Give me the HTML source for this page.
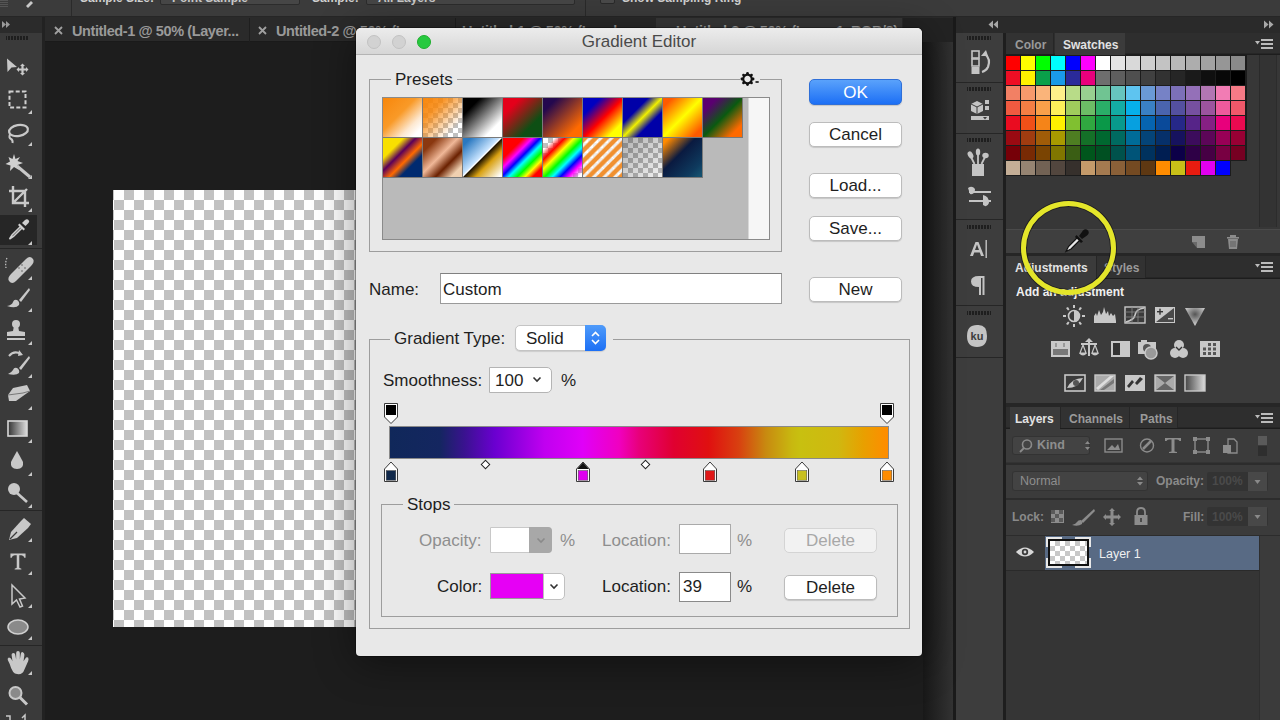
<!DOCTYPE html>
<html><head><meta charset="utf-8">
<style>
*{box-sizing:border-box}
html,body{margin:0;padding:0;width:1280px;height:720px;overflow:hidden;background:#1d1d1d;font-family:"Liberation Sans",sans-serif}
.a{position:absolute}
/* top options bar */
#opt{left:0;top:0;width:1280px;height:17px;background:#3b3b3b;border-bottom:1px solid #262626}
#tabs{left:0;top:17px;width:1280px;height:25px;background:#2a2a2a;border-bottom:1px solid #1a1a1a}
.tab{top:19px;height:24px;color:#9a9a9a;font-weight:bold;font-size:14.5px;letter-spacing:-0.4px;line-height:24px;white-space:nowrap}
#tool{left:0;top:17px;width:42px;height:703px;background:#3a3a3a}
#toolsep{left:42px;top:17px;width:3px;height:703px;background:#222}
#doc{left:45px;top:42px;width:910px;height:678px;background:#1d1d1d}
#canvas{left:113px;top:190px;width:245px;height:437px;
 background-color:#fff;
 background-image:linear-gradient(45deg,#c2c2c2 25%,transparent 25%,transparent 75%,#c2c2c2 75%),linear-gradient(45deg,#c2c2c2 25%,transparent 25%,transparent 75%,#c2c2c2 75%);
 background-size:20px 20px;background-position:1px 0,11px 10px}
/* right side */
#rcolsep{left:955px;top:17px;width:2px;height:703px;background:#1e1e1e}
#rcol{left:957px;top:17px;width:47px;height:703px;background:#2b2b2b}
#rpanel{left:1004px;top:17px;width:276px;height:703px;background:#2b2b2b;border-left:2px solid #1e1e1e}

/* dialog */
#dlg{left:356px;top:28px;width:566px;height:628px;background:#e8e8e8;border-radius:5px 5px 4px 4px;box-shadow:0 0 0 1px rgba(0,0,0,.3),0 6px 40px rgba(0,0,0,.45)}
#dtitle{left:0;top:0;width:566px;height:27px;border-radius:5px 5px 0 0;background:linear-gradient(#ececec,#d6d6d6);border-bottom:1px solid #b4b4b4;color:#4a4a4a;font-size:17px;text-align:center;line-height:28px}
.tl{width:14px;height:14px;border-radius:50%;top:7px;background:#d2d2d2;border:1px solid #c2c2c2}
.dt{color:#1e1e1e;font-size:17px;line-height:18px;white-space:nowrap}
.grp{border:1px solid #9d9d9d}
.lbl{background:#e8e8e8;padding:0 4px}
.btn{background:#fff;border:1px solid #bcbcbc;border-radius:5px;box-shadow:0 1px 1px rgba(0,0,0,.15);text-align:center;color:#1e1e1e;font-size:17px}
.sw{width:40px;height:40px;border-right:1px solid #7a7a7a;border-bottom:1px solid #7a7a7a}
.chk{background-color:#fff;background-image:linear-gradient(45deg,#c8c8c8 25%,transparent 25%,transparent 75%,#c8c8c8 75%),linear-gradient(45deg,#c8c8c8 25%,transparent 25%,transparent 75%,#c8c8c8 75%);background-size:10px 10px;background-position:0 0,5px 5px}
.fld{background:#fff;border:1px solid #9a9a9a;border-top-color:#808080}

.opt{color:#d0d0d0;font-weight:bold;font-size:12px;line-height:13px;white-space:nowrap}
.ptab{font-weight:bold;font-size:12px;line-height:24px;white-space:nowrap}
</style></head><body>
<div id="opt" class="a"></div>
<div id="tabs" class="a"></div>
<div id="doc" class="a"></div>
<div id="canvas" class="a"></div>
<div id="tool" class="a"></div>
<div id="toolsep" class="a"></div>
<svg class="a" style="left:0;top:0" width="42" height="720" viewBox="0 0 42 720">
 <rect x="0" y="17" width="42" height="16" fill="#2b2b2b"/>
 <path d="M2 21 L6 24.5 L2 28 Z M6 21 L10 24.5 L6 28 Z" fill="#9a9a9a"/>
 <rect x="6" y="36" width="22" height="4" fill="#1e1e1e"/>
 <g fill="#3a3a3a"><rect x="7" y="36" width="1" height="4"/><rect x="10" y="36" width="1" height="4"/><rect x="13" y="36" width="1" height="4"/><rect x="16" y="36" width="1" height="4"/><rect x="19" y="36" width="1" height="4"/><rect x="22" y="36" width="1" height="4"/><rect x="25" y="36" width="1" height="4"/></g>
 <rect x="0" y="215" width="37" height="30" fill="#262626"/>
 <g stroke="#262626" stroke-width="1"><line x1="0" y1="248.5" x2="42" y2="248.5"/><line x1="0" y1="510.5" x2="42" y2="510.5"/><line x1="0" y1="645.5" x2="42" y2="645.5"/></g>
 <g fill="#c8c8c8" stroke="none">
  <!-- corner triangles -->
  <path d="M28 114 L32 110 L32 114 Z M28 146 L32 142 L32 146 Z M28 179 L32 175 L32 179 Z M28 212 L32 208 L32 212 Z M28 245 L32 241 L32 245 Z M28 280 L32 276 L32 280 Z M28 312 L32 308 L32 312 Z M28 345 L32 341 L32 345 Z M28 378 L32 374 L32 378 Z M28 410 L32 406 L32 410 Z M28 443 L32 439 L32 443 Z M28 476 L32 472 L32 476 Z M28 508 L32 504 L32 508 Z M28 542 L32 538 L32 542 Z M28 575 L32 571 L32 575 Z M28 608 L32 604 L32 608 Z M28 640 L32 636 L32 640 Z M28 675 L32 671 L32 675 Z"/>
  <!-- move -->
  <path d="M7 58.5 L17 67 L11.5 67.5 L7.5 72 Z"/>
  <path d="M22.5 63.5 L25 66 L23.6 66 L23.6 68.4 L26 68.4 L26 67 L28.5 69.5 L26 72 L26 70.6 L23.6 70.6 L23.6 73 L25 73 L22.5 75.5 L20 73 L21.4 73 L21.4 70.6 L19 70.6 L19 72 L16.5 69.5 L19 67 L19 68.4 L21.4 68.4 L21.4 66 L20 66 Z"/>
 </g>
 <!-- marquee -->
 <rect x="9.5" y="91.5" width="16" height="16" fill="none" stroke="#d0d0d0" stroke-width="2" stroke-dasharray="4 2.2"/>
 <!-- lasso -->
 <ellipse cx="18.5" cy="130.5" rx="9.5" ry="5.5" fill="none" stroke="#c8c8c8" stroke-width="2.2" transform="rotate(-10 18.5 130.5)"/>
 <path d="M10 134 Q8.5 138 11 139 Q13 140 12.5 143" fill="none" stroke="#c8c8c8" stroke-width="2"/>
 <!-- wand -->
 <path d="M14 154 L15.5 159 L20 157 L17.5 161 L23 163 L17.5 165 L19 170 L14 167 L10 171 L10.5 165.5 L5.5 164 L10 161.5 L8.5 157 L12.5 159 Z" fill="#d0d0d0"/>
 <line x1="17" y1="166" x2="30" y2="177" stroke="#c8c8c8" stroke-width="3"/>
 <!-- crop -->
 <path d="M13 186 L13 203 L29 203 M9 191 L25 191 L25 207 M13 203 L27 189" fill="none" stroke="#c8c8c8" stroke-width="2.4"/>
 <!-- eyedropper -->
 <path d="M22 223 L25 220 Q27 218.5 28.5 220 Q30 221.5 28.5 223 L25.5 226 Z" fill="#cfcfcf"/>
 <path d="M19.5 223.5 L25 229 L23.5 230.5 L18 225 Z" fill="#cfcfcf"/>
 <path d="M20.5 226.5 L12 235 L9.5 239 L13.5 236.5 L22 228 Z" fill="#555" stroke="#cfcfcf" stroke-width="1.5"/>
 <!-- healing -->
 <path d="M11 274 L26 259 Q30 255 33 259 Q35 262 31 266 L16 281 Q12 285 9 281 Q7 278 11 274 Z" fill="#c8c8c8"/>
 <g fill="#8a8a8a"><circle cx="19" cy="268" r="1"/><circle cx="22" cy="271" r="1"/><circle cx="22" cy="265" r="1"/><circle cx="25" cy="268" r="1"/></g>
 <path d="M7 258 Q5 262 6 268" fill="none" stroke="#c8c8c8" stroke-width="1.2" stroke-dasharray="1.5 1.5"/>
 <!-- brush -->
 <path d="M29 288 L19 300 L21 302 L30 290 Z" fill="#c8c8c8"/>
 <path d="M17 300 Q20 302 19 305 Q16 309 7 306 Q12 305 13 302 Q14 299 17 300 Z" fill="#c8c8c8"/>
 <!-- stamp -->
 <circle cx="16" cy="324" r="4" fill="#c8c8c8"/>
 <path d="M14 326 L18 326 L19 331 L25 332 L25 336 L7 336 L7 332 L13 331 Z" fill="#c8c8c8"/>
 <rect x="7" y="338" width="18" height="2" fill="#c8c8c8"/>
 <!-- history brush -->
 <path d="M9 356 Q14 350 21 354" fill="none" stroke="#c8c8c8" stroke-width="2"/>
 <path d="M19 350 L23 355 L18 356 Z" fill="#c8c8c8"/>
 <path d="M29 356 L19 368 L21 370 L30 358 Z" fill="#c8c8c8"/>
 <path d="M17 368 Q20 370 19 373 Q16 376 8 374 Q12 372 13 370 Q14 367 17 368 Z" fill="#c8c8c8"/>
 <!-- eraser -->
 <path d="M13 388 L27 385 L30 391 L16 401 L9 401 L8 395 Z" fill="#c8c8c8"/>
 <path d="M8 395 L23 393 L30 391" fill="none" stroke="#777" stroke-width="1"/>
 <!-- gradient tool -->
 <defs><linearGradient id="gt" x1="0" x2="1"><stop offset="0" stop-color="#333"/><stop offset="1" stop-color="#ddd"/></linearGradient>
 <linearGradient id="gt2" x1="0" x2="1"><stop offset="0" stop-color="#444"/><stop offset="1" stop-color="#ddd"/></linearGradient></defs>
 <rect x="8" y="421" width="19" height="15" fill="url(#gt)" stroke="#d8d8d8" stroke-width="1.6"/>
 <!-- drop -->
 <path d="M17 451 Q13 458 11 462 Q10 469 17 469 Q24 469 23 462 Q21 458 17 451 Z" fill="#c8c8c8"/>
 <!-- dodge -->
 <circle cx="14" cy="489" r="6" fill="#c8c8c8"/>
 <line x1="17" y1="493" x2="27" y2="502" stroke="#c8c8c8" stroke-width="2.6"/>
 <!-- pen -->
 <path d="M24 518 L31 524 L28 528 L17 538 L9 540 L11 532 L21 521 Z" fill="#c8c8c8"/>
 <path d="M10 539 L17 532" stroke="#3a3a3a" stroke-width="1.2"/>
 <!-- type -->
 <g transform="translate(18 561.5) scale(0.84) translate(-18 -561.5)"><path d="M9 552 L27 552 L27 557 L25.5 557 Q25 554 22 554 L19.5 554 L19.5 569 L22 570 L22 571 L14 571 L14 570 L16.5 569 L16.5 554 L14 554 Q11 554 10.5 557 L9 557 Z" fill="#c8c8c8"/></g>
 <!-- path selection -->
 <path d="M12 585 L12 604 L16.5 600 L20 607 L22.5 606 L19.5 599 L25 598 Z" fill="#3a3a3a" stroke="#c8c8c8" stroke-width="1.5"/>
 <!-- ellipse -->
 <ellipse cx="18" cy="627" rx="10" ry="7" fill="#8a8a8a" stroke="#d0d0d0" stroke-width="1.5"/>
 <!-- hand -->
 <g transform="translate(0,4) translate(18 660) scale(0.92) translate(-18 -660)">
 <path d="M9 660 L7 656 Q6 654 8 653 Q10 653 11 655 L12 657 L11 650 Q11 648 13 648 Q15 648 15 650 L16 655 L16 648 Q16 646 18 646 Q20 646 20 648 L20 655 L21 649 Q21 647 23 647 Q25 648 25 650 L24 657 L26 654 Q27 652 29 653 Q30 655 29 657 L25 666 Q23 672 17 671 Q12 671 9 660 Z" fill="#c8c8c8"/>
 </g>
 <!-- zoom -->
 <circle cx="15.5" cy="693" r="6" fill="#8a8a8a" stroke="#c8c8c8" stroke-width="2"/>
 <line x1="19.5" y1="697" x2="27" y2="704.5" stroke="#c8c8c8" stroke-width="3"/>
 <!-- fg/bg hint -->
 <path d="M6 716 L10 716 L10 720 M22 718 L25 715 L25 720" fill="none" stroke="#c8c8c8" stroke-width="1.5"/>
</svg>

<div class="a" style="left:71px;top:0;width:1px;height:16px;background:#2a2a2a"></div>
<svg class="a" style="left:22px;top:0" width="16" height="8" viewBox="0 0 16 8"><path d="M4 6 L9 1 L11 3 L6 8 Z" fill="#c8c8c8"/></svg>
<div class="a" style="left:0;top:0;width:8px;height:8px;background:repeating-linear-gradient(#555 0,#555 1px,transparent 1px,transparent 2px)"></div>
<div class="a" style="left:585px;top:0;width:1px;height:16px;background:#2a2a2a"></div>
<div class="a opt" style="left:80px;top:-8px">Sample Size:</div>
<div class="a" style="left:160px;top:-11px;width:140px;height:16px;background:#464646;border:1px solid #2c2c2c;border-radius:2px"></div>
<div class="a opt" style="left:172px;top:-8px;color:#c8c8c8">Point Sample</div>
<div class="a opt" style="left:312px;top:-8px">Sample:</div>
<div class="a" style="left:366px;top:-11px;width:209px;height:16px;background:#464646;border:1px solid #2c2c2c;border-radius:2px"></div>
<div class="a opt" style="left:378px;top:-8px;color:#c8c8c8">All Layers</div>
<div class="a" style="left:600px;top:-9px;width:15px;height:13px;background:#4a4a4a;border:1px solid #2a2a2a;border-radius:2px"></div>
<div class="a opt" style="left:622px;top:-8px">Show Sampling Ring</div>
<div class="a" style="left:249px;top:18px;width:1px;height:24px;background:#1e1e1e"></div><div class="a" style="left:455px;top:18px;width:1px;height:24px;background:#1e1e1e"></div>
<div class="a" style="left:656px;top:18px;width:246px;height:24px;background:#383838"></div>
<div class="a tab" style="left:72px">Untitled-1 @ 50% (Layer...</div>
<div class="a tab" style="left:276px">Untitled-2 @ 50% (Layer...</div>
<div class="a tab" style="left:462px">Untitled-1 @ 50% (Levels...</div>
<div class="a tab" style="left:676px;color:#a8a8a8">Untitled-3 @ 50% (Layer 1, RGB/8)</div>
<svg class="a" style="left:54px;top:26px" width="9" height="9" viewBox="0 0 9 9"><path d="M1 1 L8 8 M8 1 L1 8" stroke="#a0a0a0" stroke-width="1.8"/></svg>
<svg class="a" style="left:258px;top:26px" width="9" height="9" viewBox="0 0 9 9"><path d="M1 1 L8 8 M8 1 L1 8" stroke="#a0a0a0" stroke-width="1.8"/></svg>
<div class="a" style="left:923px;top:42px;width:30px;height:678px;background:linear-gradient(90deg,#181818,#323232)"></div>

<!-- right icon column -->
<div class="a" style="left:903px;top:18px;width:50px;height:24px;background:#232323"></div>
<div class="a" style="left:953px;top:17px;width:3px;height:703px;background:#1a1a1a"></div>
<div class="a" style="left:956px;top:17px;width:48px;height:16px;background:#2a2a2a"></div>
<svg class="a" style="left:987px;top:20px" width="12" height="9" viewBox="0 0 12 9"><path d="M6 0.5 L1.5 4.5 L6 8.5 Z M11 0.5 L6.5 4.5 L11 8.5 Z" fill="#a8a8a8"/></svg>
<div class="a" style="left:956px;top:33px;width:47px;height:687px;background:#3d3d3d"></div>
<div class="a" style="left:956px;top:33px;width:47px;height:50px;background:#3d3d3d;border-bottom:1px solid #262626"></div>
<div class="a" style="left:956px;top:84px;width:47px;height:50px;background:#3d3d3d;border-bottom:1px solid #262626"></div>
<div class="a" style="left:956px;top:135px;width:47px;height:85px;background:#3d3d3d;border-bottom:1px solid #262626"></div>
<div class="a" style="left:956px;top:221px;width:47px;height:85px;background:#3d3d3d;border-bottom:1px solid #262626"></div>
<div class="a" style="left:956px;top:307px;width:47px;height:51px;background:#3d3d3d;border-bottom:1px solid #262626"></div>
<svg class="a" style="left:956px;top:33px" width="47" height="330" viewBox="0 0 47 330">
 <g fill="#1e1e1e">
  <rect x="11" y="3" width="24" height="4"/><rect x="11" y="54" width="24" height="4"/><rect x="11" y="105" width="24" height="4"/><rect x="11" y="192" width="24" height="4"/><rect x="11" y="278" width="24" height="4"/>
 </g>
 <g fill="#3c3c3c"><rect x="12" y="3" width="1" height="4"/><rect x="15" y="3" width="1" height="4"/><rect x="18" y="3" width="1" height="4"/><rect x="21" y="3" width="1" height="4"/><rect x="24" y="3" width="1" height="4"/><rect x="27" y="3" width="1" height="4"/><rect x="30" y="3" width="1" height="4"/><rect x="33" y="3" width="1" height="4"/>
 <rect x="12" y="54" width="1" height="4"/><rect x="15" y="54" width="1" height="4"/><rect x="18" y="54" width="1" height="4"/><rect x="21" y="54" width="1" height="4"/><rect x="24" y="54" width="1" height="4"/><rect x="27" y="54" width="1" height="4"/><rect x="30" y="54" width="1" height="4"/><rect x="33" y="54" width="1" height="4"/>
 <rect x="12" y="105" width="1" height="4"/><rect x="15" y="105" width="1" height="4"/><rect x="18" y="105" width="1" height="4"/><rect x="21" y="105" width="1" height="4"/><rect x="24" y="105" width="1" height="4"/><rect x="27" y="105" width="1" height="4"/><rect x="30" y="105" width="1" height="4"/><rect x="33" y="105" width="1" height="4"/>
 <rect x="12" y="192" width="1" height="4"/><rect x="15" y="192" width="1" height="4"/><rect x="18" y="192" width="1" height="4"/><rect x="21" y="192" width="1" height="4"/><rect x="24" y="192" width="1" height="4"/><rect x="27" y="192" width="1" height="4"/><rect x="30" y="192" width="1" height="4"/><rect x="33" y="192" width="1" height="4"/>
 <rect x="12" y="278" width="1" height="4"/><rect x="15" y="278" width="1" height="4"/><rect x="18" y="278" width="1" height="4"/><rect x="21" y="278" width="1" height="4"/><rect x="24" y="278" width="1" height="4"/><rect x="27" y="278" width="1" height="4"/><rect x="30" y="278" width="1" height="4"/><rect x="33" y="278" width="1" height="4"/></g>
 <g fill="#c4c4c4">
  <!-- history -->
  <rect x="16" y="18" width="7" height="7" fill="none" stroke="#c4c4c4" stroke-width="1.6"/>
  <rect x="16" y="26" width="7" height="7" fill="none" stroke="#c4c4c4" stroke-width="1.6"/>
  <rect x="15.5" y="34" width="8" height="7"/>
  <path d="M25 23 L30 17 L32 23 Z"/>
  <path d="M29 21 Q35 26 32 34 Q30 38 26 39" fill="none" stroke="#c4c4c4" stroke-width="2.2"/>
  <!-- 3D -->
  <path d="M21 68 L27 71 L27 78 L21 81 L15 78 L15 71 Z"/>
  <path d="M15 71 L21 74 L27 71 M21 74 L21 81" stroke="#3c3c3c" stroke-width="1" fill="none"/>
  <rect x="29" y="67" width="4" height="4"/><rect x="29" y="73" width="4" height="4"/>
  <rect x="15" y="83" width="18" height="4"/>
  <path d="M27 84 L31 84 L29 86.5 Z" fill="#3c3c3c"/>
  <!-- brushes -->
  <rect x="16" y="131" width="12" height="12"/>
  <path d="M18.5 131 L15 124 M22 131 L22 121 M25.5 131 L29 124" stroke="#c4c4c4" stroke-width="1.8" fill="none"/>
  <ellipse cx="14.5" cy="122" rx="2.5" ry="3.8" transform="rotate(-30 14.5 122)"/>
  <ellipse cx="22" cy="119" rx="2.2" ry="3.5"/>
  <ellipse cx="29.5" cy="122.5" rx="3.2" ry="2.8"/>
  <!-- brush presets / sliders -->
  <rect x="13" y="158" width="22" height="2"/><rect x="13" y="167" width="22" height="2"/>
  <path d="M12 155 Q16 152 19 156 Q19 162 14 161 Z"/>
  <path d="M27 162 Q33 163 33 170 Q31 175 27 172 Z"/>
  <!-- A| -->
  <path d="M14 223 L19.5 209 L22.5 209 L28 223 L25 223 L23.8 219.5 L18.2 219.5 L17 223 Z M19 217 L23 217 L21 211.5 Z"/>
  <rect x="29.5" y="207" width="1.4" height="18"/>
  <!-- pilcrow -->
  <path d="M23 243 L23 262 L25 262 L25 245 L26.5 245 L26.5 262 L28.5 262 L28.5 243 Z M23 243 Q15 243 15 248.5 Q15 254 23 254 Z"/>
  <!-- ku -->
  <path d="M21 292 Q31 291 31 303 Q31 314 21 314 Q11 314 11 303 Q11 292 21 292 Z"/>
 </g>
 <text x="21" y="307" font-family="Liberation Sans" font-weight="bold" font-size="11" fill="#3c3c3c" text-anchor="middle">ku</text>
</svg>

<!-- right panel -->
<div class="a" style="left:1003px;top:17px;width:277px;height:16px;background:#2a2a2a"></div>
<div class="a" style="left:1003px;top:33px;width:3px;height:687px;background:#1e1e1e"></div>
<svg class="a" style="left:1263px;top:20px" width="12" height="9" viewBox="0 0 12 9"><path d="M1 0.5 L5.5 4.5 L1 8.5 Z M6 0.5 L10.5 4.5 L6 8.5 Z" fill="#a8a8a8"/></svg>

<!-- swatches panel -->
<div class="a" style="left:1006px;top:33px;width:274px;height:21px;background:#2e2e2e;border-bottom:1px solid #262626"></div>
<div class="a" style="left:1006px;top:33px;width:48px;height:21px;background:#323232;border-right:1px solid #262626"></div>
<div class="a" style="left:1055px;top:33px;width:70px;height:22px;background:#3b3b3b"></div>
<div class="a ptab" style="left:1015px;top:33px;color:#9a9a9a">Color</div>
<div class="a ptab" style="left:1063px;top:33px;color:#e2e2e2">Swatches</div>
<svg class="a menuic" style="left:1255px;top:38px" width="19" height="11" viewBox="0 0 19 11"><path d="M0 3 L5 3 L2.5 6.5 Z" fill="#bbb"/><rect x="6" y="1" width="12" height="2" fill="#bbb"/><rect x="6" y="5" width="12" height="2" fill="#bbb"/><rect x="6" y="9" width="12" height="2" fill="#bbb"/></svg>
<div class="a" style="left:1006px;top:55px;width:274px;height:175px;background:#373737"></div>
<div class="a" style="left:1005px;top:55px;width:242px;height:106px;background:#1c1c1c"></div><div class="a" style="left:1005px;top:161px;width:226px;height:15px;background:#1c1c1c"></div>
<div class="a" style="left:1006px;top:56px;width:14px;height:14px;background:#ff0000"></div><div class="a" style="left:1021px;top:56px;width:14px;height:14px;background:#ffff00"></div><div class="a" style="left:1036px;top:56px;width:14px;height:14px;background:#00ff00"></div><div class="a" style="left:1051px;top:56px;width:14px;height:14px;background:#00ffff"></div><div class="a" style="left:1066px;top:56px;width:14px;height:14px;background:#0000ff"></div><div class="a" style="left:1081px;top:56px;width:14px;height:14px;background:#ff00ff"></div><div class="a" style="left:1096px;top:56px;width:14px;height:14px;background:#ffffff"></div><div class="a" style="left:1111px;top:56px;width:14px;height:14px;background:#e4e4e4"></div><div class="a" style="left:1126px;top:56px;width:14px;height:14px;background:#d9d9d9"></div><div class="a" style="left:1141px;top:56px;width:14px;height:14px;background:#cecece"></div><div class="a" style="left:1156px;top:56px;width:14px;height:14px;background:#c3c3c3"></div><div class="a" style="left:1171px;top:56px;width:14px;height:14px;background:#b8b8b8"></div><div class="a" style="left:1186px;top:56px;width:14px;height:14px;background:#adadad"></div><div class="a" style="left:1201px;top:56px;width:14px;height:14px;background:#a2a2a2"></div><div class="a" style="left:1216px;top:56px;width:14px;height:14px;background:#969696"></div><div class="a" style="left:1231px;top:56px;width:14px;height:14px;background:#8a8a8a"></div><div class="a" style="left:1006px;top:71px;width:14px;height:14px;background:#ed0e24"></div><div class="a" style="left:1021px;top:71px;width:14px;height:14px;background:#fff200"></div><div class="a" style="left:1036px;top:71px;width:14px;height:14px;background:#0aa04a"></div><div class="a" style="left:1051px;top:71px;width:14px;height:14px;background:#1a9ae8"></div><div class="a" style="left:1066px;top:71px;width:14px;height:14px;background:#2a2a9a"></div><div class="a" style="left:1081px;top:71px;width:14px;height:14px;background:#e8007c"></div><div class="a" style="left:1096px;top:71px;width:14px;height:14px;background:#6e6e6e"></div><div class="a" style="left:1111px;top:71px;width:14px;height:14px;background:#5e5e5e"></div><div class="a" style="left:1126px;top:71px;width:14px;height:14px;background:#4f4f4f"></div><div class="a" style="left:1141px;top:71px;width:14px;height:14px;background:#404040"></div><div class="a" style="left:1156px;top:71px;width:14px;height:14px;background:#323232"></div><div class="a" style="left:1171px;top:71px;width:14px;height:14px;background:#262626"></div><div class="a" style="left:1186px;top:71px;width:14px;height:14px;background:#1a1a1a"></div><div class="a" style="left:1201px;top:71px;width:14px;height:14px;background:#0f0f0f"></div><div class="a" style="left:1216px;top:71px;width:14px;height:14px;background:#080808"></div><div class="a" style="left:1231px;top:71px;width:14px;height:14px;background:#000000"></div><div class="a" style="left:1006px;top:86px;width:14px;height:14px;background:#f28064"></div><div class="a" style="left:1021px;top:86px;width:14px;height:14px;background:#f79a6c"></div><div class="a" style="left:1036px;top:86px;width:14px;height:14px;background:#fab47a"></div><div class="a" style="left:1051px;top:86px;width:14px;height:14px;background:#fff08a"></div><div class="a" style="left:1066px;top:86px;width:14px;height:14px;background:#b8dc88"></div><div class="a" style="left:1081px;top:86px;width:14px;height:14px;background:#98d090"></div><div class="a" style="left:1096px;top:86px;width:14px;height:14px;background:#70c492"></div><div class="a" style="left:1111px;top:86px;width:14px;height:14px;background:#66c4be"></div><div class="a" style="left:1126px;top:86px;width:14px;height:14px;background:#5ec4f0"></div><div class="a" style="left:1141px;top:86px;width:14px;height:14px;background:#6a9ad6"></div><div class="a" style="left:1156px;top:86px;width:14px;height:14px;background:#7682c6"></div><div class="a" style="left:1171px;top:86px;width:14px;height:14px;background:#7c70b8"></div><div class="a" style="left:1186px;top:86px;width:14px;height:14px;background:#9470b8"></div><div class="a" style="left:1201px;top:86px;width:14px;height:14px;background:#b276b4"></div><div class="a" style="left:1216px;top:86px;width:14px;height:14px;background:#f27cb4"></div><div class="a" style="left:1231px;top:86px;width:14px;height:14px;background:#f67a86"></div><div class="a" style="left:1006px;top:101px;width:14px;height:14px;background:#f05a40"></div><div class="a" style="left:1021px;top:101px;width:14px;height:14px;background:#f47e44"></div><div class="a" style="left:1036px;top:101px;width:14px;height:14px;background:#f9a04a"></div><div class="a" style="left:1051px;top:101px;width:14px;height:14px;background:#fff05a"></div><div class="a" style="left:1066px;top:101px;width:14px;height:14px;background:#a0cc5c"></div><div class="a" style="left:1081px;top:101px;width:14px;height:14px;background:#6cbc66"></div><div class="a" style="left:1096px;top:101px;width:14px;height:14px;background:#2aae68"></div><div class="a" style="left:1111px;top:101px;width:14px;height:14px;background:#14aca4"></div><div class="a" style="left:1126px;top:101px;width:14px;height:14px;background:#06b0ea"></div><div class="a" style="left:1141px;top:101px;width:14px;height:14px;background:#3a80c4"></div><div class="a" style="left:1156px;top:101px;width:14px;height:14px;background:#4a64ae"></div><div class="a" style="left:1171px;top:101px;width:14px;height:14px;background:#5450a0"></div><div class="a" style="left:1186px;top:101px;width:14px;height:14px;background:#7650a0"></div><div class="a" style="left:1201px;top:101px;width:14px;height:14px;background:#9c549e"></div><div class="a" style="left:1216px;top:101px;width:14px;height:14px;background:#ee5a9c"></div><div class="a" style="left:1231px;top:101px;width:14px;height:14px;background:#f0586a"></div><div class="a" style="left:1006px;top:116px;width:14px;height:14px;background:#ea0c20"></div><div class="a" style="left:1021px;top:116px;width:14px;height:14px;background:#f05018"></div><div class="a" style="left:1036px;top:116px;width:14px;height:14px;background:#f58418"></div><div class="a" style="left:1051px;top:116px;width:14px;height:14px;background:#fff000"></div><div class="a" style="left:1066px;top:116px;width:14px;height:14px;background:#80c030"></div><div class="a" style="left:1081px;top:116px;width:14px;height:14px;background:#30a840"></div><div class="a" style="left:1096px;top:116px;width:14px;height:14px;background:#0a9848"></div><div class="a" style="left:1111px;top:116px;width:14px;height:14px;background:#089a8c"></div><div class="a" style="left:1126px;top:116px;width:14px;height:14px;background:#06a0e0"></div><div class="a" style="left:1141px;top:116px;width:14px;height:14px;background:#0664b0"></div><div class="a" style="left:1156px;top:116px;width:14px;height:14px;background:#0a4a9a"></div><div class="a" style="left:1171px;top:116px;width:14px;height:14px;background:#262888"></div><div class="a" style="left:1186px;top:116px;width:14px;height:14px;background:#562488"></div><div class="a" style="left:1201px;top:116px;width:14px;height:14px;background:#862084"></div><div class="a" style="left:1216px;top:116px;width:14px;height:14px;background:#e8007c"></div><div class="a" style="left:1231px;top:116px;width:14px;height:14px;background:#ea0a50"></div><div class="a" style="left:1006px;top:131px;width:14px;height:14px;background:#9a0a12"></div><div class="a" style="left:1021px;top:131px;width:14px;height:14px;background:#a03c10"></div><div class="a" style="left:1036px;top:131px;width:14px;height:14px;background:#a05c08"></div><div class="a" style="left:1051px;top:131px;width:14px;height:14px;background:#a89a00"></div><div class="a" style="left:1066px;top:131px;width:14px;height:14px;background:#4e7e22"></div><div class="a" style="left:1081px;top:131px;width:14px;height:14px;background:#147028"></div><div class="a" style="left:1096px;top:131px;width:14px;height:14px;background:#006830"></div><div class="a" style="left:1111px;top:131px;width:14px;height:14px;background:#006a60"></div><div class="a" style="left:1126px;top:131px;width:14px;height:14px;background:#006c98"></div><div class="a" style="left:1141px;top:131px;width:14px;height:14px;background:#044478"></div><div class="a" style="left:1156px;top:131px;width:14px;height:14px;background:#06306a"></div><div class="a" style="left:1171px;top:131px;width:14px;height:14px;background:#16125e"></div><div class="a" style="left:1186px;top:131px;width:14px;height:14px;background:#3c0c5c"></div><div class="a" style="left:1201px;top:131px;width:14px;height:14px;background:#5c0658"></div><div class="a" style="left:1216px;top:131px;width:14px;height:14px;background:#980056"></div><div class="a" style="left:1231px;top:131px;width:14px;height:14px;background:#980034"></div><div class="a" style="left:1006px;top:146px;width:14px;height:14px;background:#760008"></div><div class="a" style="left:1021px;top:146px;width:14px;height:14px;background:#782a04"></div><div class="a" style="left:1036px;top:146px;width:14px;height:14px;background:#7a4402"></div><div class="a" style="left:1051px;top:146px;width:14px;height:14px;background:#807600"></div><div class="a" style="left:1066px;top:146px;width:14px;height:14px;background:#3a5e14"></div><div class="a" style="left:1081px;top:146px;width:14px;height:14px;background:#00561c"></div><div class="a" style="left:1096px;top:146px;width:14px;height:14px;background:#005022"></div><div class="a" style="left:1111px;top:146px;width:14px;height:14px;background:#00524c"></div><div class="a" style="left:1126px;top:146px;width:14px;height:14px;background:#005478"></div><div class="a" style="left:1141px;top:146px;width:14px;height:14px;background:#00325e"></div><div class="a" style="left:1156px;top:146px;width:14px;height:14px;background:#001e52"></div><div class="a" style="left:1171px;top:146px;width:14px;height:14px;background:#0c0048"></div><div class="a" style="left:1186px;top:146px;width:14px;height:14px;background:#2e0046"></div><div class="a" style="left:1201px;top:146px;width:14px;height:14px;background:#460044"></div><div class="a" style="left:1216px;top:146px;width:14px;height:14px;background:#780042"></div><div class="a" style="left:1231px;top:146px;width:14px;height:14px;background:#760022"></div><div class="a" style="left:1006px;top:161px;width:14px;height:14px;background:#c4ae96"></div><div class="a" style="left:1021px;top:161px;width:14px;height:14px;background:#968472"></div><div class="a" style="left:1036px;top:161px;width:14px;height:14px;background:#726254"></div><div class="a" style="left:1051px;top:161px;width:14px;height:14px;background:#52463e"></div><div class="a" style="left:1066px;top:161px;width:14px;height:14px;background:#36302c"></div><div class="a" style="left:1081px;top:161px;width:14px;height:14px;background:#c49a6a"></div><div class="a" style="left:1096px;top:161px;width:14px;height:14px;background:#a47a50"></div><div class="a" style="left:1111px;top:161px;width:14px;height:14px;background:#8a6038"></div><div class="a" style="left:1126px;top:161px;width:14px;height:14px;background:#744a22"></div><div class="a" style="left:1141px;top:161px;width:14px;height:14px;background:#5e3812"></div><div class="a" style="left:1156px;top:161px;width:14px;height:14px;background:#ff8c00"></div><div class="a" style="left:1171px;top:161px;width:14px;height:14px;background:#c8c018"></div><div class="a" style="left:1186px;top:161px;width:14px;height:14px;background:#e81c10"></div><div class="a" style="left:1201px;top:161px;width:14px;height:14px;background:#e000f0"></div><div class="a" style="left:1216px;top:161px;width:14px;height:14px;background:#0000ff"></div>
<div class="a" style="left:1259px;top:55px;width:18px;height:172px;background:#333;border-left:1px solid #2a2a2a;border-right:1px solid #2c2c2c"></div>
<div class="a" style="left:1006px;top:229px;width:274px;height:24px;background:#3f3f3f;border-top:1px solid #4a4a4a"></div>
<svg class="a" style="left:1190px;top:234px" width="60" height="16" viewBox="0 0 60 16">
 <path d="M2 2 L15 2 L15 14 L7 14 L7 8 L2 8 Z" fill="#8c8c8c"/><path d="M2 8 L7 8 L7 14 Z" fill="#6a6a6a"/>
 <rect x="37" y="3" width="12" height="1.6" fill="#8c8c8c"/><rect x="40" y="1" width="6" height="2" fill="#8c8c8c"/>
 <path d="M38 5 L48 5 L47 15 L39 15 Z" fill="#8c8c8c"/>
 <g stroke="#5e5e5e" stroke-width="1"><line x1="41" y1="7" x2="41" y2="13"/><line x1="43" y1="7" x2="43" y2="13"/><line x1="45" y1="7" x2="45" y2="13"/></g>
</svg>
<div class="a" style="left:1006px;top:253px;width:274px;height:3px;background:#262626"></div>

<!-- adjustments panel -->
<div class="a" style="left:1006px;top:256px;width:274px;height:22px;background:#2e2e2e;border-bottom:1px solid #262626"></div>
<div class="a" style="left:1006px;top:256px;width:90px;height:23px;background:#3b3b3b"></div>
<div class="a" style="left:1096px;top:256px;width:50px;height:22px;background:#323232;border-left:1px solid #262626;border-right:1px solid #262626"></div>
<div class="a ptab" style="left:1015px;top:256px;color:#e2e2e2">Adjustments</div>
<div class="a ptab" style="left:1104px;top:256px;color:#9a9a9a">Styles</div>
<svg class="a menuic" style="left:1255px;top:261px" width="19" height="11" viewBox="0 0 19 11"><path d="M0 3 L5 3 L2.5 6.5 Z" fill="#bbb"/><rect x="6" y="1" width="12" height="2" fill="#bbb"/><rect x="6" y="5" width="12" height="2" fill="#bbb"/><rect x="6" y="9" width="12" height="2" fill="#bbb"/></svg>
<div class="a" style="left:1006px;top:279px;width:274px;height:124px;background:#3b3b3b"></div>
<div class="a" style="left:1016px;top:284px;color:#f0f0f0;font-weight:bold;font-size:12px;line-height:16px;white-space:nowrap">Add an adjustment</div>

<svg class="a" style="left:1040px;top:300px" width="190" height="100" viewBox="0 0 190 100">
 <g fill="#c8c8c8" stroke="none">
  <!-- sun -->
  <circle cx="34" cy="16" r="5.5" fill="none" stroke="#c8c8c8" stroke-width="1.6"/>
  <path d="M34 10.5 A5.5 5.5 0 0 1 34 21.5 Z"/>
  <rect x="33" y="5" width="2" height="3"/><rect x="33" y="24" width="2" height="3"/><rect x="23" y="15" width="3" height="2"/><rect x="42" y="15" width="3" height="2"/>
  <path d="M26 8 L28 7 L29.5 9.5 L28 10.5 Z M42 8 L40 7 L38.5 9.5 L40 10.5 Z M26 24 L28 25 L29.5 22.5 L28 21.5 Z M42 24 L40 25 L38.5 22.5 L40 21.5 Z"/>
  <!-- levels -->
  <path d="M54 21 L54 16 L56 13 L57 16 L59 10 L61 15 L63 12 L64 7 L66 14 L68 11 L69 16 L71 13 L73 16 L75 14 L76 21 Z"/>
  <rect x="54" y="21" width="22" height="2"/>
  <!-- curves -->
  <rect x="85" y="7" width="20" height="16" fill="none" stroke="#c8c8c8" stroke-width="1.4"/>
  <path d="M86 22 Q94 20 95 15 Q96 9 104 8" fill="none" stroke="#c8c8c8" stroke-width="1.6"/>
  <g stroke="#888" stroke-width=".8"><line x1="85" y1="12" x2="105" y2="12"/><line x1="85" y1="17" x2="105" y2="17"/><line x1="92" y1="7" x2="92" y2="23"/><line x1="98" y1="7" x2="98" y2="23"/></g>
  <!-- exposure -->
  <rect x="115" y="7" width="20" height="16"/>
  <path d="M116 22 L134 8 L134 22 Z" fill="#4a4a4a"/>
  <rect x="117" y="11" width="6" height="1.4" fill="#333"/><rect x="119.3" y="8.7" width="1.4" height="6" fill="#333"/>
  <rect x="128" y="18" width="5" height="1.4" fill="#c8c8c8"/>
  <!-- vibrance -->
  <defs><radialGradient id="vib" cx=".5" cy=".35" r=".6"><stop offset="0" stop-color="#555"/><stop offset="1" stop-color="#d0d0d0"/></radialGradient></defs>
  <path d="M145 8 L165 8 L155 26 Z" fill="url(#vib)"/>
  <!-- row2 -->
  <rect x="11" y="41" width="19" height="16"/>
  <rect x="13" y="49" width="15" height="6" fill="#777"/>
  <g fill="#999"><rect x="15" y="43" width="2" height="4"/><rect x="23" y="43" width="2" height="4"/></g>
  <!-- balance -->
  <rect x="48" y="40" width="2" height="16"/><rect x="41" y="43" width="16" height="2"/>
  <path d="M49 38 L45 42 L53 42 Z"/>
  <path d="M40 53 L43 45 L46 53 Z M52 53 L55 45 L58 53 Z" fill="none" stroke="#c8c8c8" stroke-width="1.2"/>
  <path d="M39 53 L47 53 Q43 58 39 53 Z M51 53 L59 53 Q55 58 51 53 Z"/>
  <!-- b&w -->
  <rect x="71" y="41" width="19" height="16"/>
  <rect x="73" y="43" width="7" height="12" fill="#333"/>
  <!-- photo filter -->
  <rect x="98" y="42" width="18" height="12"/><rect x="101" y="40" width="6" height="3"/>
  <circle cx="107" cy="48" r="4" fill="#555"/>
  <circle cx="111" cy="53" r="6" fill="#999" stroke="#c8c8c8" stroke-width="1.5"/>
  <!-- channel mixer -->
  <circle cx="139" cy="45" r="5"/><circle cx="135" cy="53" r="5"/><circle cx="143" cy="53" r="5"/>
  <path d="M136 47 L139 50 L142 47" fill="none" stroke="#333" stroke-width="1.4"/>
  <!-- color lookup -->
  <rect x="160" y="41" width="20" height="16"/>
  <g fill="#555"><rect x="168" y="43" width="3" height="3"/><rect x="173" y="43" width="3" height="3"/><rect x="163" y="47.5" width="3" height="3"/><rect x="168" y="47.5" width="3" height="3"/><rect x="173" y="47.5" width="3" height="3"/><rect x="163" y="52" width="3" height="3"/><rect x="168" y="52" width="3" height="3"/><rect x="173" y="52" width="3" height="3"/></g>
  <!-- row3 -->
  <rect x="25" y="75" width="20" height="16" fill="none" stroke="#c8c8c8" stroke-width="1.6"/>
  <path d="M27 88 Q32 78 43 78 Q38 88 27 88 Z" fill="#c8c8c8"/><circle cx="36" cy="83" r="3" fill="#555"/>
  <rect x="55" y="75" width="20" height="16" fill="#aaa" stroke="#c8c8c8" stroke-width="1.4"/>
  <path d="M56 88 L70 76 L74 76 L58 90 Z" fill="#ddd"/><path d="M60 90 L74 79 L74 83 L64 90 Z" fill="#777"/>
  <rect x="85" y="75" width="20" height="16" fill="#c8c8c8"/>
  <path d="M87 86 L92 80 L95 83 L100 77 L103 79 L97 85 L94 82 L89 88 Z" fill="#333"/>
  <rect x="115" y="75" width="20" height="16" fill="#aaa" stroke="#c8c8c8" stroke-width="1.4"/>
  <path d="M116 76 L125 83 L134 76 Z M116 90 L125 83 L134 90 Z" fill="#666"/>
  <rect x="145" y="75" width="20" height="16" fill="url(#gt2)" stroke="#c8c8c8" stroke-width="1.4"/>
 </g>
</svg>

<div class="a" style="left:1006px;top:403px;width:274px;height:4px;background:#262626"></div>

<!-- layers panel -->
<div class="a" style="left:1006px;top:407px;width:274px;height:21px;background:#2e2e2e;border-bottom:1px solid #262626"></div>
<div class="a" style="left:1010px;top:407px;width:50px;height:22px;background:#3b3b3b"></div>
<div class="a" style="left:1060px;top:407px;width:70px;height:21px;background:#323232;border-left:1px solid #262626;border-right:1px solid #262626"></div>
<div class="a" style="left:1130px;top:407px;width:48px;height:21px;background:#323232;border-right:1px solid #262626"></div>
<div class="a ptab" style="left:1015px;top:407px;color:#e2e2e2">Layers</div>
<div class="a ptab" style="left:1069px;top:407px;color:#9a9a9a">Channels</div>
<div class="a ptab" style="left:1140px;top:407px;color:#9a9a9a">Paths</div>
<svg class="a menuic" style="left:1255px;top:412px" width="19" height="11" viewBox="0 0 19 11"><path d="M0 3 L5 3 L2.5 6.5 Z" fill="#bbb"/><rect x="6" y="1" width="12" height="2" fill="#bbb"/><rect x="6" y="5" width="12" height="2" fill="#bbb"/><rect x="6" y="9" width="12" height="2" fill="#bbb"/></svg>
<div class="a" style="left:1006px;top:429px;width:274px;height:291px;background:#3b3b3b"></div>
<div class="a" style="left:1006px;top:462px;width:274px;height:3px;background:#2c2c2c;border-top:1px solid #333"></div>
<div class="a" style="left:1006px;top:498px;width:274px;height:2px;background:#2c2c2c"></div>
<div class="a" style="left:1006px;top:535px;width:274px;height:1px;background:#2c2c2c"></div>
<!-- filter row -->
<div class="a" style="left:1012px;top:436px;width:78px;height:19px;background:#434343;border-radius:3px;box-shadow:inset 0 0 0 1px #333"></div>
<svg class="a" style="left:1018px;top:438px" width="80" height="16" viewBox="0 0 80 16">
 <circle cx="9" cy="6.5" r="4.5" fill="none" stroke="#8a8a8a" stroke-width="1.6"/><line x1="6" y1="10" x2="2" y2="14" stroke="#8a8a8a" stroke-width="1.8"/>
 <path d="M67 6 L69.5 3 L72 6 Z M67 9 L69.5 12 L72 9 Z" fill="#8a8a8a"/>
</svg>
<div class="a" style="left:1037px;top:437px;color:#8e8e8e;font-weight:bold;font-size:12.5px;line-height:17px">Kind</div>
<svg class="a" style="left:1100px;top:434px" width="175" height="24" viewBox="0 0 175 24">
 <g fill="none" stroke="#8c8c8c" stroke-width="1.4">
  <rect x="5" y="5" width="17" height="13"/>
  <circle cx="47" cy="11.5" r="6.5"/>
  <rect x="95" y="5" width="13" height="13"/>
 </g>
 <path d="M7 16 L12 11 L15 14 L18 10 L20 16 Z" fill="#8c8c8c"/>
 <path d="M43 15 L51 7" stroke="#8c8c8c" stroke-width="2.5"/>
 <g fill="#8c8c8c"><rect x="93" y="3" width="4" height="4"/><rect x="106" y="3" width="4" height="4"/><rect x="93" y="16" width="4" height="4"/><rect x="106" y="16" width="4" height="4"/></g>
 <path d="M65 4 L81 4 L81 7 L79.5 7 Q79 5.5 77 5.5 L74.5 5.5 L74.5 17.5 L77 18 L77 19 L69 19 L69 18 L71.5 17.5 L71.5 5.5 L69 5.5 Q67 5.5 66.5 7 L65 7 Z" fill="#8c8c8c"/>
 <path d="M128 5 L134 5 L137 8 L137 19 L128 19 Z" fill="none" stroke="#8c8c8c" stroke-width="1.3"/>
 <rect x="123" y="11" width="8" height="8" fill="#8c8c8c"/>
 <rect x="158" y="2" width="9" height="9" fill="#5a5a5a"/><rect x="158" y="12" width="9" height="10" fill="#2e2e2e"/>
</svg>
<!-- blend row -->
<div class="a" style="left:1012px;top:471px;width:136px;height:20px;background:#434343;border-radius:3px;box-shadow:inset 0 0 0 1px #333"></div>
<div class="a" style="left:1020px;top:472px;color:#8e8e8e;font-size:12.5px;line-height:18px">Normal</div>
<svg class="a" style="left:1136px;top:475px" width="8" height="12" viewBox="0 0 8 12"><path d="M1 5 L4 1.5 L7 5 Z M1 7 L4 10.5 L7 7 Z" fill="#8a8a8a"/></svg>
<div class="a" style="left:1156px;top:473px;color:#8a8a8a;font-weight:bold;font-size:12px;line-height:17px">Opacity:</div>
<div class="a" style="left:1207px;top:472px;width:61px;height:19px;background:#333;border-radius:2px"></div>
<div class="a" style="left:1212px;top:473px;color:#4a4a4a;font-weight:bold;font-size:12px;line-height:17px">100%</div>
<div class="a" style="left:1248px;top:472px;width:19px;height:19px;background:#484848"></div>
<svg class="a" style="left:1253px;top:479px" width="9" height="6" viewBox="0 0 9 6"><path d="M1.5 1 L7.5 1 L4.5 5 Z" fill="#8a8a8a"/></svg>
<!-- lock row -->
<div class="a" style="left:1012px;top:509px;color:#8a8a8a;font-weight:bold;font-size:12px;line-height:17px">Lock:</div>
<svg class="a" style="left:1048px;top:505px" width="110" height="24" viewBox="0 0 110 24">
 <g fill="#8c8c8c"><rect x="3" y="5" width="13" height="13"/></g>
 <g fill="#5a5a5a"><rect x="3" y="5" width="4" height="4"/><rect x="11" y="5" width="4" height="4"/><rect x="7" y="9" width="4" height="4"/><rect x="3" y="13" width="4" height="4"/><rect x="11" y="13" width="4" height="4"/></g>
 <path d="M46 4 L33 16 L35 18 L47 6 Z" fill="#8c8c8c"/><path d="M33 15 Q35 17 34 19 Q30 22 24 20 Q28 19 29 17 Q30 15 33 15 Z" fill="#8c8c8c"/>
 <path d="M64 3 L67 6 L65.5 6 L65.5 10.5 L70 10.5 L70 9 L73 12 L70 15 L70 13.5 L65.5 13.5 L65.5 18 L67 18 L64 21 L61 18 L62.5 18 L62.5 13.5 L58 13.5 L58 15 L55 12 L58 9 L58 10.5 L62.5 10.5 L62.5 6 L61 6 Z" fill="#8c8c8c"/>
 <path d="M89 11 L89 7 Q89 3 93 3 Q97 3 97 7 L97 11" fill="none" stroke="#8c8c8c" stroke-width="1.8"/>
 <rect x="86.5" y="10" width="13" height="10" fill="#8c8c8c"/><rect x="92" y="13" width="2" height="4" fill="#4a4a4a"/>
</svg>
<div class="a" style="left:1183px;top:509px;color:#8a8a8a;font-weight:bold;font-size:12px;line-height:17px">Fill:</div>
<div class="a" style="left:1207px;top:507px;width:61px;height:19px;background:#333;border-radius:2px"></div>
<div class="a" style="left:1212px;top:509px;color:#4a4a4a;font-weight:bold;font-size:12px;line-height:17px">100%</div>
<div class="a" style="left:1248px;top:507px;width:19px;height:19px;background:#484848"></div>
<svg class="a" style="left:1253px;top:514px" width="9" height="6" viewBox="0 0 9 6"><path d="M1.5 1 L7.5 1 L4.5 5 Z" fill="#8a8a8a"/></svg>
<!-- layer row -->
<div class="a" style="left:1006px;top:536px;width:254px;height:184px;background:#353535"></div><div class="a" style="left:1006px;top:536px;width:254px;height:35px;background:#3a3a3a;border-bottom:1px solid #2a2a2a"></div>
<div class="a" style="left:1045px;top:536px;width:215px;height:34px;background:#586a84"></div>
<div class="a" style="left:1259px;top:536px;width:1px;height:184px;background:#2e2e2e"></div>
<svg class="a" style="left:1015px;top:545px" width="20" height="14" viewBox="0 0 20 14"><path d="M1 7 Q10 -2 19 7 Q10 16 1 7 Z" fill="#d8d8d8"/><circle cx="10" cy="7" r="3.2" fill="#3b3b3b"/><circle cx="10" cy="7" r="1.4" fill="#d8d8d8"/></svg>
<div class="a" style="left:1046px;top:537px;width:45px;height:31px;border:2px solid #e8e8e8"></div>
<div class="a" style="left:1062px;top:537px;width:13px;height:31px;background:#586a84"></div>
<div class="a" style="left:1046px;top:547px;width:45px;height:11px;background:#586a84"></div>
<div class="a chk" style="left:1048px;top:539px;width:41px;height:27px;border:2px solid #111"></div>
<div class="a" style="left:1099px;top:546px;color:#f0f0f0;font-size:12.5px;line-height:17px">Layer 1</div>

<!-- yellow circle -->
<div class="a" style="left:1021px;top:201px;width:95px;height:94px;border-radius:50%;border:5.5px solid #e4e62a;box-shadow:0 0 0 1px rgba(0,0,0,.45),inset 0 0 0 1px rgba(0,0,0,.45)"></div>
<svg class="a" style="left:1062px;top:227px" width="28" height="28" viewBox="0 0 28 28">
 <path d="M17 9 L21 3.5 Q23.5 1 26 3.5 Q28 6 25 8.5 L20 12 Z" fill="#111"/>
 <path d="M14.5 8 L21 14.5 L19 16 L13 10 Z" fill="#111"/>
 <path d="M15 11 L6.5 19.5 L4 24.5 L9 22 L17.5 13.5 Z" fill="#e8e8e8" stroke="#111" stroke-width="1.2"/>
</svg>


<div id="dlg" class="a">
 <div id="dtitle" class="a">Gradient Editor</div>
 <div class="a tl" style="left:11px"></div>
 <div class="a tl" style="left:36px"></div>
 <div class="a tl" style="left:61px;background:#27c93f;border-color:#1fae2f"></div>

 <!-- presets group -->
 <div class="a grp" style="left:13px;top:51px;width:413px;height:173px"></div>
 <div class="a dt lbl" style="left:35px;top:43px">Presets</div>
 <div class="a" style="left:384px;top:42px;width:20px;height:18px;background:#e8e8e8"></div>
 <svg class="a" style="left:383px;top:43px" width="22" height="16" viewBox="0 0 22 16">
  <g transform="translate(8.5,8)">
   <circle r="4.3" fill="none" stroke="#111" stroke-width="2.2"/>
   <g fill="#111"><circle cx="0" cy="-5.6" r="1.4"/><circle cx="0" cy="5.6" r="1.4"/><circle cx="-5.6" cy="0" r="1.4"/><circle cx="5.6" cy="0" r="1.4"/>
   <circle cx="3.96" cy="3.96" r="1.4"/><circle cx="-3.96" cy="3.96" r="1.4"/><circle cx="3.96" cy="-3.96" r="1.4"/><circle cx="-3.96" cy="-3.96" r="1.4"/></g>
  </g>
  <rect x="16.5" y="10.2" width="3.2" height="1.6" fill="#111"/>
 </svg>
 <div class="a" style="left:26px;top:69px;width:388px;height:143px;background:#bababa;border:1px solid #8a8a8a"></div>
 <div class="a" style="left:392px;top:70px;width:21px;height:141px;background:#f6f6f6;border-left:1px solid #d8d8d8"></div>
 <div id="swg" class="a" style="left:27px;top:70px;width:360px;height:80px"><div class="a sw" style="left:0px;top:0;background:linear-gradient(135deg,#f8860a 0%,#f99a28 42%,#fde8d0 72%,#fff 88%)"></div><div class="a sw" style="left:40px;top:0;background:linear-gradient(135deg,#f8860a 0%,rgba(248,134,10,.85) 30%,rgba(248,134,10,0) 80%),linear-gradient(45deg,#c0c0c0 25%,transparent 25%,transparent 75%,#c0c0c0 75%) 0 0/10px 10px,linear-gradient(45deg,#c0c0c0 25%,transparent 25%,transparent 75%,#c0c0c0 75%) 5px 5px/10px 10px,#fff"></div><div class="a sw" style="left:80px;top:0;background:linear-gradient(135deg,#000 22%,#fff 78%)"></div><div class="a sw" style="left:120px;top:0;background:linear-gradient(135deg,#e4001a 22%,#0d4f14 72%)"></div><div class="a sw" style="left:160px;top:0;background:linear-gradient(135deg,#24084e 18%,#ff6a00 82%)"></div><div class="a sw" style="left:200px;top:0;background:linear-gradient(135deg,#0000c0 22%,#ff0000 52%,#ffff00 82%)"></div><div class="a sw" style="left:240px;top:0;background:linear-gradient(135deg,#0000a8 32%,#f0f000 50%,#0000a8 68%)"></div><div class="a sw" style="left:280px;top:0;background:linear-gradient(135deg,#ff5a00 12%,#ffff00 50%,#ff5a00 88%)"></div><div class="a sw" style="left:320px;top:0;background:linear-gradient(135deg,#5a0070 18%,#0a5a10 50%,#ff6a00 84%)"></div><div class="a sw" style="left:0px;top:40px;background:linear-gradient(135deg,#f8e000 26%,#5a005a 42%,#ff6a00 58%,#002a70 72%)"></div><div class="a sw" style="left:40px;top:40px;background:linear-gradient(135deg,#8a3810 18%,#f0b898 45%,#6a2000 66%,#f0d0b0 86%)"></div><div class="a sw" style="left:80px;top:40px;background:linear-gradient(135deg,#2a78c0 10%,#c8e4ff 46%,#fff 49%,#1e1200 51%,#d8a010 66%,#fff 96%)"></div><div class="a sw" style="left:120px;top:40px;background:linear-gradient(135deg,#ff0000 26%,#ff00ff 38%,#0000ff 48%,#00ffff 57%,#00ff00 68%,#ffff00 78%,#ff0000 88%)"></div><div class="a sw" style="left:160px;top:40px;background:linear-gradient(135deg,rgba(255,0,0,0) 15%,#ff0000 28%,#ffff00 40%,#00ff00 52%,#00ffff 62%,#0000ff 72%,#ff00ff 82%,rgba(255,0,255,0) 95%),linear-gradient(45deg,#c0c0c0 25%,transparent 25%,transparent 75%,#c0c0c0 75%) 0 0/10px 10px,linear-gradient(45deg,#c0c0c0 25%,transparent 25%,transparent 75%,#c0c0c0 75%) 5px 5px/10px 10px,#fff"></div><div class="a sw" style="left:200px;top:40px;background:repeating-linear-gradient(135deg,#f09030 0,#f09030 3px,rgba(255,255,255,.75) 4.5px,rgba(255,255,255,.75) 6px,#f09030 7.5px),linear-gradient(45deg,#c0c0c0 25%,transparent 25%,transparent 75%,#c0c0c0 75%) 0 0/10px 10px,linear-gradient(45deg,#c0c0c0 25%,transparent 25%,transparent 75%,#c0c0c0 75%) 5px 5px/10px 10px,#fff"></div><div class="a sw" style="left:240px;top:40px;background:linear-gradient(135deg,rgba(0,0,0,.3),rgba(0,0,0,.05)),linear-gradient(45deg,#c0c0c0 25%,transparent 25%,transparent 75%,#c0c0c0 75%) 0 0/10px 10px,linear-gradient(45deg,#c0c0c0 25%,transparent 25%,transparent 75%,#c0c0c0 75%) 5px 5px/10px 10px,#fff"></div><div class="a sw" style="left:280px;top:40px;background:linear-gradient(135deg,#ff8a00 8%,#0a1a40 42%,#0e3a5e 80%,#14506e 95%)"></div></div>

 <!-- buttons -->
 <div class="a btn" style="left:453px;top:51px;width:93px;height:26px;background:linear-gradient(#5aa2fb,#1c6ff5);border-color:#2f6fd8;color:#fff;line-height:25px">OK</div>
 <div class="a btn" style="left:453px;top:94px;width:93px;height:25px;line-height:24px">Cancel</div>
 <div class="a btn" style="left:453px;top:145px;width:93px;height:25px;line-height:24px">Load...</div>
 <div class="a btn" style="left:453px;top:188px;width:93px;height:25px;line-height:24px">Save...</div>
 <div class="a btn" style="left:453px;top:249px;width:93px;height:25px;line-height:24px">New</div>

 <!-- name -->
 <div class="a dt" style="left:13px;top:253px">Name:</div>
 <div class="a fld" style="left:84px;top:245px;width:342px;height:31px"></div>
 <div class="a dt" style="left:87px;top:253px">Custom</div>

 <!-- gradient group -->
 <div class="a grp" style="left:13px;top:311px;width:541px;height:290px"></div>
 <div class="a dt lbl" style="left:34px;top:302px;width:126px">Gradient Type:</div>
 <div class="a" style="left:250px;top:305px;width:7px;height:12px;background:#e8e8e8"></div>
 <div class="a" style="left:159px;top:297px;width:91px;height:26px;background:#fff;border:1px solid #c4c4c4;border-radius:5px;box-shadow:0 1px 1px rgba(0,0,0,.12)"></div>
 <div class="a" style="left:229px;top:297px;width:21px;height:26px;background:linear-gradient(#4f9bfa,#1c6ff5);border-radius:0 5px 5px 0"></div>
 <svg class="a" style="left:233px;top:301px" width="13" height="18" viewBox="0 0 13 18"><path d="M3 7 L6.5 3.5 L10 7 M3 11 L6.5 14.5 L10 11" stroke="#fff" stroke-width="1.6" fill="none"/></svg>
 <div class="a dt" style="left:170px;top:302px">Solid</div>
 <div class="a dt" style="left:27px;top:344px">Smoothness:</div>
 <div class="a" style="left:133px;top:339px;width:63px;height:26px;background:#fff;border:1px solid #b4b4b4;border-radius:0 5px 5px 0"></div>
 <div class="a dt" style="left:139px;top:344px">100</div>
 <svg class="a" style="left:176px;top:347px" width="10" height="8" viewBox="0 0 10 8"><path d="M1.5 2.5 L5 6 L8.5 2.5" stroke="#333" stroke-width="1.6" fill="none"/></svg>
 <div class="a dt" style="left:205px;top:344px">%</div>

 <!-- gradient bar -->
 <div class="a" style="left:33px;top:398px;width:500px;height:33px;border:1px solid #8a8a8a;background:linear-gradient(90deg,#10285a 0%,#142660 10%,#3a1290 15%,#6a00d0 21%,#c000f0 31%,#e000f8 38.7%,#f000c0 46%,#e8007a 50%,#e00030 57%,#e01010 64%,#d84010 70%,#c88a10 75.5%,#c8b810 80.7%,#c8c010 82.4%,#d0b810 90%,#e8a000 95%,#ff8c00 100%)"></div>
 <svg class="a" style="left:28px;top:375px" width="14" height="22" viewBox="0 0 14 22"><path d="M0.5 0.5 L13.5 0.5 L13.5 14 L7 20.5 L0.5 14 Z" fill="#fff" stroke="#3a3a3a" stroke-width="1"/><rect x="2" y="2" width="10" height="10" fill="#000"/></svg><svg class="a" style="left:524px;top:375px" width="14" height="22" viewBox="0 0 14 22"><path d="M0.5 0.5 L13.5 0.5 L13.5 14 L7 20.5 L0.5 14 Z" fill="#fff" stroke="#3a3a3a" stroke-width="1"/><rect x="2" y="2" width="10" height="10" fill="#000"/></svg><svg class="a" style="left:28px;top:433px" width="14" height="22" viewBox="0 0 14 22"><path d="M0.5 20.5 L0.5 8 L7 1 L13.5 8 L13.5 20.5 Z" fill="#fff" stroke="#3a3a3a" stroke-width="1"/><rect x="2.2" y="9.6" width="9.6" height="9.6" fill="#10284a" stroke="#444" stroke-width=".5"/></svg><svg class="a" style="left:220px;top:433px" width="14" height="22" viewBox="0 0 14 22"><path d="M0.5 20.5 L0.5 8 L7 1 L13.5 8 L13.5 20.5 Z" fill="#fff" stroke="#3a3a3a" stroke-width="1"/><path d="M1 8 L7 1.5 L13 8 Z" fill="#111"/><rect x="2.2" y="9.6" width="9.6" height="9.6" fill="#e000f0" stroke="#444" stroke-width=".5"/></svg><svg class="a" style="left:347px;top:433px" width="14" height="22" viewBox="0 0 14 22"><path d="M0.5 20.5 L0.5 8 L7 1 L13.5 8 L13.5 20.5 Z" fill="#fff" stroke="#3a3a3a" stroke-width="1"/><rect x="2.2" y="9.6" width="9.6" height="9.6" fill="#e01818" stroke="#444" stroke-width=".5"/></svg><svg class="a" style="left:439px;top:433px" width="14" height="22" viewBox="0 0 14 22"><path d="M0.5 20.5 L0.5 8 L7 1 L13.5 8 L13.5 20.5 Z" fill="#fff" stroke="#3a3a3a" stroke-width="1"/><rect x="2.2" y="9.6" width="9.6" height="9.6" fill="#c8c020" stroke="#444" stroke-width=".5"/></svg><svg class="a" style="left:524px;top:433px" width="14" height="22" viewBox="0 0 14 22"><path d="M0.5 20.5 L0.5 8 L7 1 L13.5 8 L13.5 20.5 Z" fill="#fff" stroke="#3a3a3a" stroke-width="1"/><rect x="2.2" y="9.6" width="9.6" height="9.6" fill="#ff8c00" stroke="#444" stroke-width=".5"/></svg><div class="a" style="left:126px;top:433px;width:7px;height:7px;border:1.5px solid #222;background:#fff;transform:rotate(45deg)"></div><div class="a" style="left:286px;top:433px;width:7px;height:7px;border:1.5px solid #222;background:#fff;transform:rotate(45deg)"></div>

 <!-- stops group -->
 <div class="a grp" style="left:25px;top:476px;width:517px;height:113px"></div>
 <div class="a dt lbl" style="left:47px;top:468px">Stops</div>
 <div class="a dt" style="left:63px;top:504px;color:#8e8e8e">Opacity:</div>
 <div class="a" style="left:134px;top:499px;width:62px;height:26px;background:#fff;border:1px solid #c8c8c8;border-radius:0 4px 4px 0"></div>
 <div class="a" style="left:173px;top:499px;width:23px;height:26px;background:#a8a8a8;border-radius:0 4px 4px 0"></div>
 <svg class="a" style="left:180px;top:508px" width="10" height="8" viewBox="0 0 10 8"><path d="M1.5 2.5 L5 6 L8.5 2.5" stroke="#8a8a8a" stroke-width="1.6" fill="none"/></svg>
 <div class="a dt" style="left:204px;top:504px;color:#8e8e8e">%</div>
 <div class="a dt" style="left:246px;top:504px;color:#8e8e8e">Location:</div>
 <div class="a fld" style="left:323px;top:496px;width:52px;height:30px;border-color:#aaa"></div>
 <div class="a dt" style="left:381px;top:504px;color:#8e8e8e">%</div>
 <div class="a btn" style="left:428px;top:500px;width:93px;height:25px;line-height:24px;background:#f2f2f2;color:#a8a8a8;border-color:#d4d4d4;box-shadow:none">Delete</div>

 <div class="a dt" style="left:81px;top:550px">Color:</div>
 <div class="a" style="left:134px;top:545px;width:54px;height:26px;background:#e600f5;border:1px solid #9a9a9a"></div>
 <div class="a" style="left:187px;top:545px;width:22px;height:27px;background:#fff;border:1px solid #c0c0c0;border-radius:0 5px 5px 0"></div>
 <svg class="a" style="left:193px;top:554px" width="10" height="8" viewBox="0 0 10 8"><path d="M1.5 2.5 L5 6 L8.5 2.5" stroke="#333" stroke-width="1.6" fill="none"/></svg>
 <div class="a dt" style="left:246px;top:550px">Location:</div>
 <div class="a fld" style="left:323px;top:544px;width:52px;height:30px;border-color:#8a8a8a"></div>
 <div class="a dt" style="left:327px;top:550px">39</div>
 <div class="a dt" style="left:381px;top:550px">%</div>
 <div class="a btn" style="left:428px;top:547px;width:93px;height:25px;line-height:24px">Delete</div>
</div>
</body></html>
